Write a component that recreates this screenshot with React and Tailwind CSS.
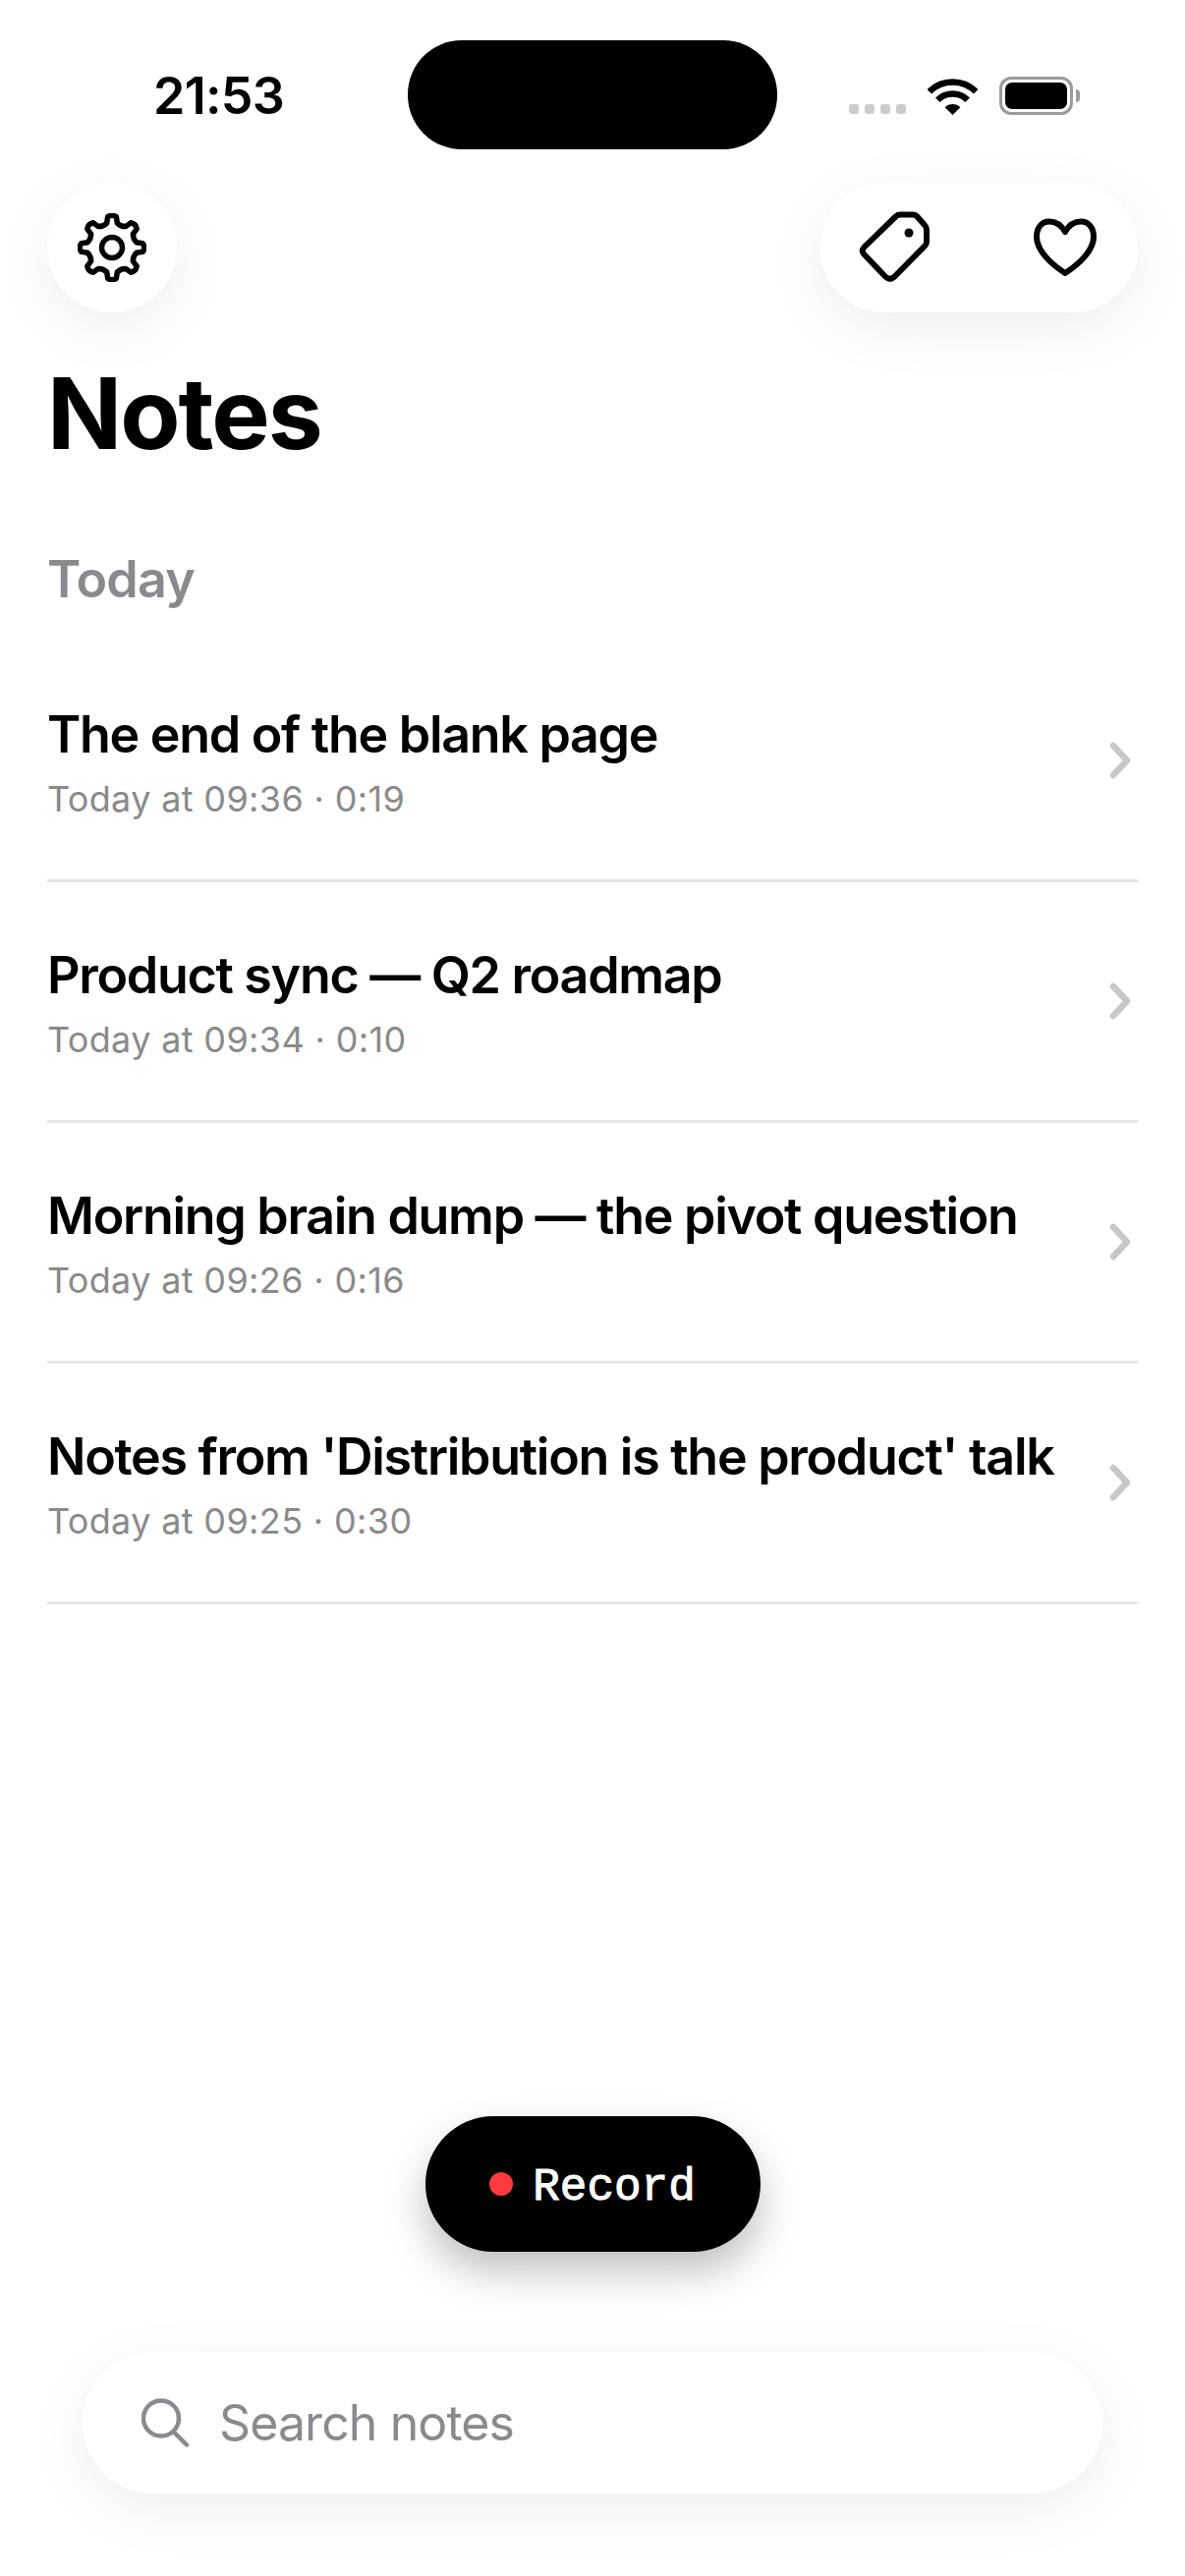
import React from "react";

const notes = [
  { title: "The end of the blank page", meta: "Today at 09:36 · 0:19" },
  { title: "Product sync — Q2 roadmap", meta: "Today at 09:34 · 0:10" },
  { title: "Morning brain dump — the pivot question", meta: "Today at 09:26 · 0:16" },
  { title: "Notes from 'Distribution is the product' talk", meta: "Today at 09:25 · 0:30" },
];

// 8 tooth gear outline, centre 35,35
function gearPath() {
  const pt = (a, r) => `${(35 + r * Math.sin(a)).toFixed(2)} ${(35 - r * Math.cos(a)).toFixed(2)}`;
  const step = Math.PI / 4;
  let d = "";
  for (let i = 0; i < 8; i++) {
    const a = i * step;
    const baseL = a - 0.21;
    const baseR = a + 0.21;
    d += `${i === 0 ? "M" : "L"}${pt(baseL, 25.5)} L${pt(a - 0.14, 31.5)} Q${pt(a, 34.5)} ${pt(a + 0.14, 31.5)} L${pt(baseR, 25.5)} `;
    d += `Q${pt(a + step / 2, 23)} ${pt(a + step - 0.21, 25.5)} `;
  }
  return d + "Z";
}

function GearIcon() {
  return (
    <svg width="70" height="70" viewBox="0 0 70 70" fill="none" stroke="#000" strokeWidth="5.5" strokeLinejoin="round">
      <path d={gearPath()} />
      <circle cx="35" cy="35" r="10.5" />
    </svg>
  );
}

function TagIcon() {
  return (
    <svg width="72" height="72" viewBox="0 0 72 72" fill="none" stroke="#000" strokeWidth="6" strokeLinejoin="round">
      <path d="M38 5 Q39.5 3.5 42 3.5 H55 Q57.5 3.5 59 5 L67 14 Q69 16 69 19 V31 Q69 33.5 67.5 35 L36.5 66.5 Q31.5 71 27 66.5 L5.5 44 Q2 40 5.5 36.5 Z" />
      <circle cx="51" cy="22" r="4.5" fill="#000" stroke="none" />
    </svg>
  );
}

function HeartIcon() {
  return (
    <svg width="64" height="59" viewBox="0 0 64 59" fill="none" stroke="#000" strokeWidth="6" strokeLinejoin="round">
      <path d="M32 14 C28 7 22 3.5 16 3.5 C8 3.5 3 10 3 19 C3 33 18 47 32 56 C46 47 61 33 61 19 C61 10 56 3.5 48 3.5 C42 3.5 36 7 32 14 Z" />
    </svg>
  );
}

function WifiIcon() {
  return (
    <svg width="51" height="37" viewBox="0 0 51 37" fill="none" stroke="#000" strokeWidth="6.5">
      <path d="M1.8 13.3 A33.5 33.5 0 0 1 49.2 13.3" />
      <path d="M10.3 21.8 A21.5 21.5 0 0 1 40.7 21.8" />
      <path d="M25.5 37 L17.7 29.2 A11 11 0 0 1 33.3 29.2 Z" fill="#000" stroke="none" />
    </svg>
  );
}

function Chevron() {
  return (
    <svg width="22" height="38" viewBox="0 0 22 38" fill="none" stroke="#c7c7c9" strokeWidth="6.5" strokeLinecap="round" strokeLinejoin="round">
      <path d="M4 4 L18 19 L4 34" />
    </svg>
  );
}

function SearchIcon() {
  return (
    <svg width="50" height="50" viewBox="0 0 50 50" fill="none" stroke="#8a8a8e" strokeWidth="4.5" strokeLinecap="round">
      <circle cx="20" cy="20.5" r="18" />
      <path d="M32.5 34 L46 47.5" />
    </svg>
  );
}

export default function App() {
  return (
    <div className="w-[1206px] h-[2622px] bg-white flex flex-col overflow-hidden font-['Inter',sans-serif] text-black">
      {/* Status bar */}
      <div className="flex h-[186px] shrink-0">
        <div className="w-[415px] pl-[156px] pt-[68px] text-[52px] leading-[60px] font-semibold tracking-[-0.7px]">21:53</div>
        <div className="w-[376px] h-[111px] mt-[41px] bg-black rounded-[55px]" />
        <div className="flex items-end h-[117px] pl-[73px]">
          <div className="flex gap-[6px] mb-px">
            <div className="w-[10px] h-[10px] rounded-[3px] bg-[#cccccc]" />
            <div className="w-[10px] h-[10px] rounded-[3px] bg-[#cccccc]" />
            <div className="w-[10px] h-[10px] rounded-[3px] bg-[#cccccc]" />
            <div className="w-[10px] h-[10px] rounded-[3px] bg-[#cccccc]" />
          </div>
          <div className="ml-[22px]">
            <WifiIcon />
          </div>
          <div className="ml-[22px] flex items-center">
            <div className="w-[75px] h-[39px] border-[3px] border-[#9b9b9b] rounded-[12px] p-[3px]">
              <div className="w-full h-full bg-black rounded-[7px]" />
            </div>
            <div className="w-[4px] h-[13px] ml-[3px] bg-[#9b9b9b] rounded-r-full" />
          </div>
        </div>
      </div>

      {/* Top buttons */}
      <div className="flex justify-between px-[48px] shrink-0">
        <div className="w-[132px] h-[132px] rounded-full bg-white shadow-[0_16px_60px_rgba(0,0,0,0.07)] flex items-center justify-center">
          <GearIcon />
        </div>
        <div className="w-[324px] h-[132px] rounded-[66px] bg-white shadow-[0_16px_60px_rgba(0,0,0,0.07)] flex items-center pl-[40px]">
          <div className="-mt-[3px]">
            <TagIcon />
          </div>
          <div className="ml-[106px] -mt-[2px]">
            <HeartIcon />
          </div>
        </div>
      </div>

      <h1 className="px-[48px] mt-[43px] text-[100px] leading-[120px] font-bold tracking-[-2px]">Notes</h1>
      <div className="px-[48px] mt-[79px] text-[52px] leading-[60px] font-semibold text-[#8a8a8e] tracking-[-0.8px]">Today</div>

      {/* Note rows */}
      <div className="mx-[48px] mt-[33px]">
        {notes.map((note) => (
          <div key={note.title} className="h-[245px] border-b-[3px] border-[#e5e5e5] flex items-center justify-between pr-[7px]">
            <div className="pt-[3px]">
              <div className="text-[52px] leading-[62px] font-semibold tracking-[-1.3px]">{note.title}</div>
              <div className="mt-[12px] text-[36px] leading-[44px] text-[#8a8a8a] tracking-[0.35px]">{note.meta}</div>
            </div>
            <Chevron />
          </div>
        ))}
      </div>

      {/* Record + search */}
      <div className="mt-auto flex flex-col items-center pb-[84px]">
        <div className="w-[341px] h-[138px] rounded-[69px] bg-black shadow-[0_20px_40px_rgba(0,0,0,0.25)] flex items-center justify-center gap-[20px]">
          <div className="w-[24px] h-[24px] rounded-full bg-[#ff3b3f]" />
          <span className="pt-[8px] font-['Liberation_Mono',monospace] text-[46px] leading-[56px] text-white [-webkit-text-stroke:1px_white]">Record</span>
        </div>
        <div className="w-[1038px] h-[144px] mt-[102px] rounded-[72px] bg-white shadow-[0_16px_60px_rgba(0,0,0,0.07)] flex items-center pl-[60px] gap-[29px]">
          <SearchIcon />
          <span className="text-[50px] leading-[60px] text-[#8a8a8e] tracking-[-0.9px]">Search notes</span>
        </div>
      </div>
    </div>
  );
}
